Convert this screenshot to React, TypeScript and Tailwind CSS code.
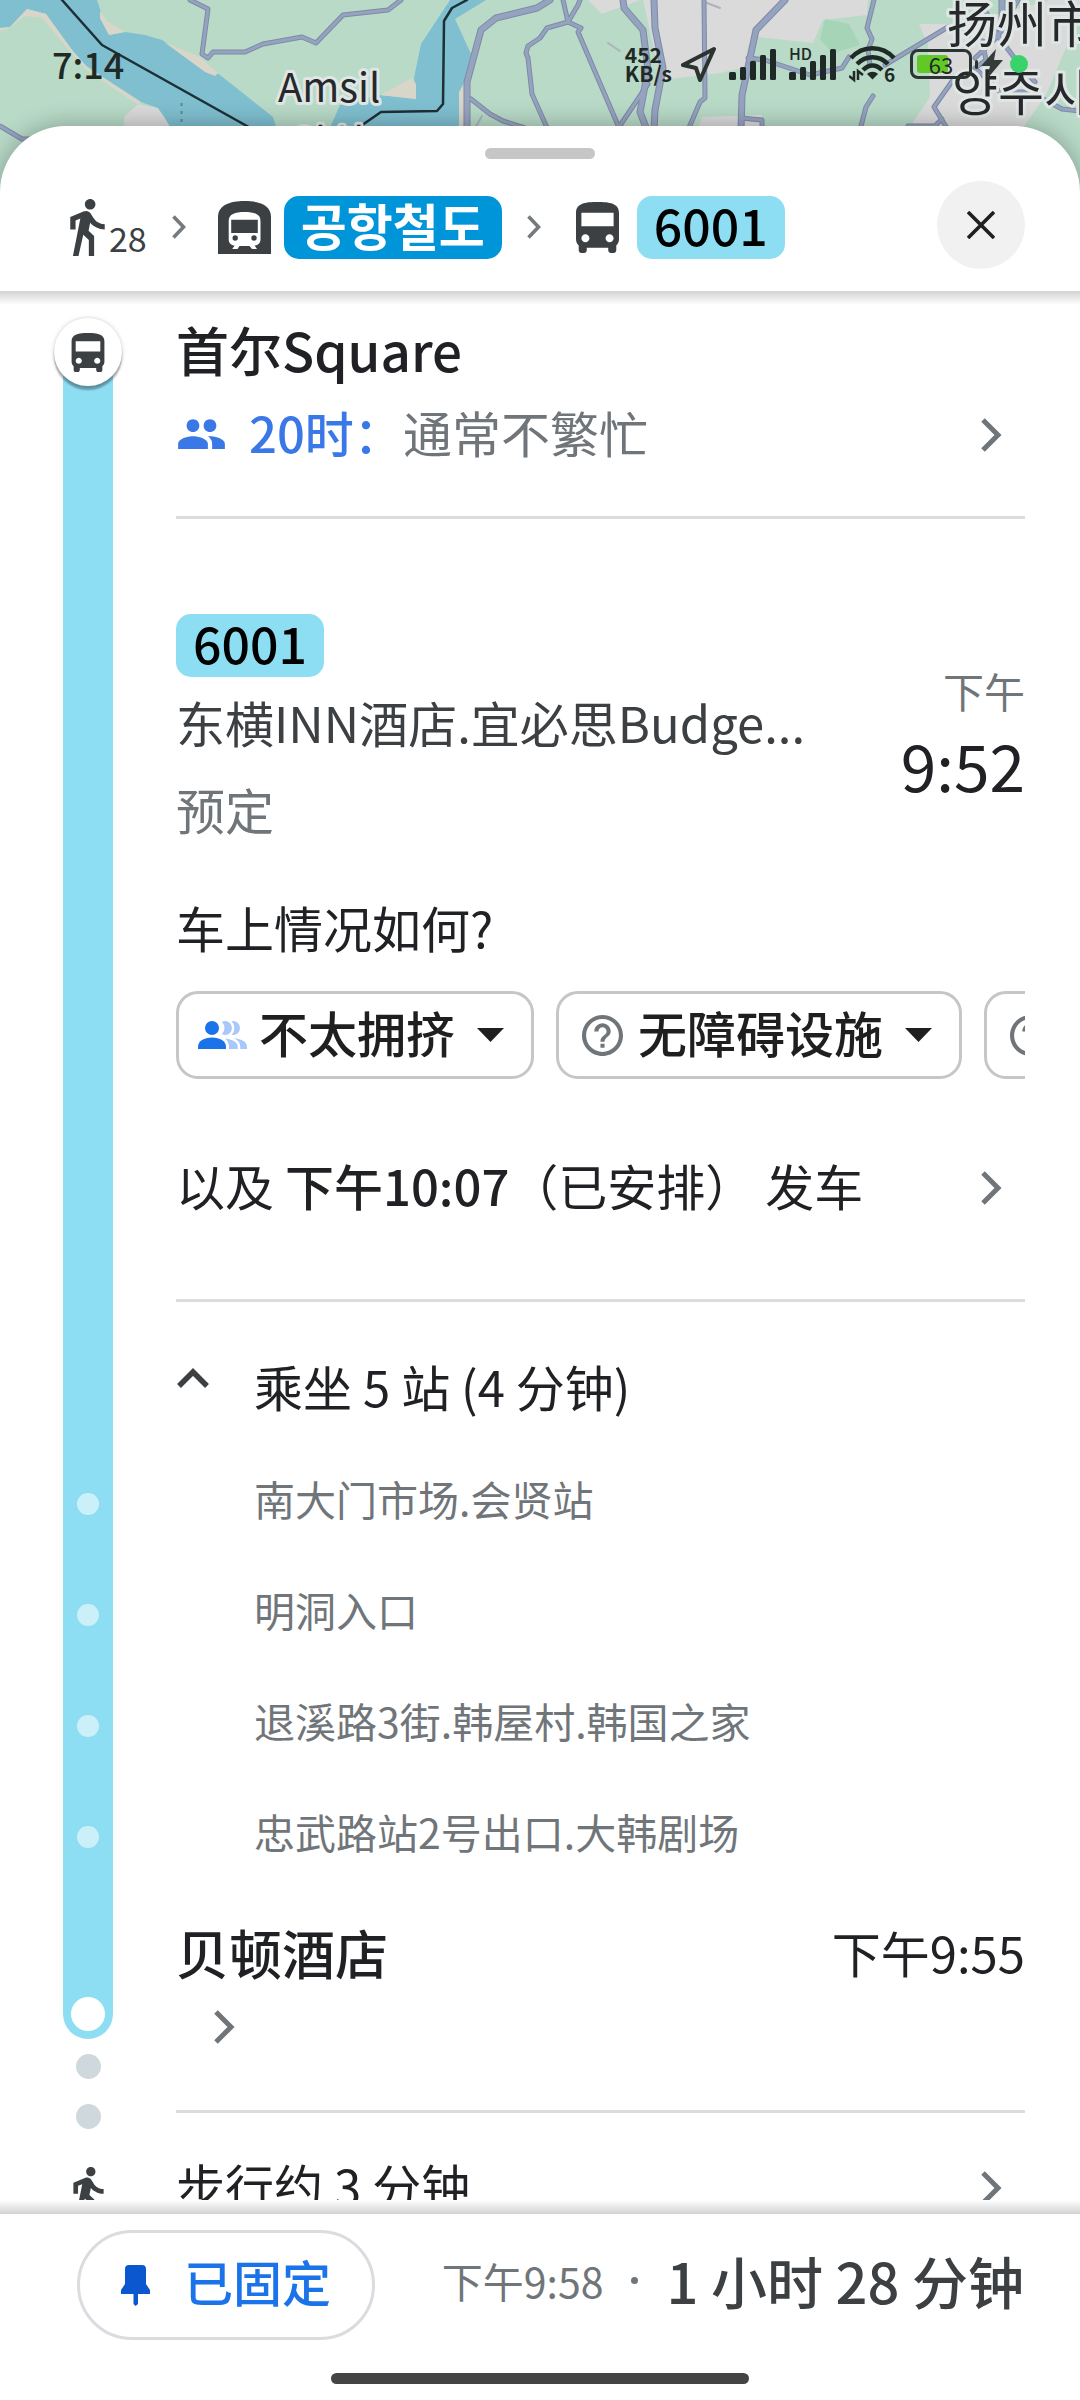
import React from "react";

function Chevron() {
  return (
    <svg viewBox="0 -6 21 40" className="h-[40px] w-[21px] shrink-0" fill="none" stroke="#70757a" strokeWidth="5">
      <path d="M2 2 L17 17 L2 32" />
    </svg>
  );
}

function StepArrow() {
  return (
    <svg viewBox="0 0 14 24" className="ml-[25px] mr-[32px] h-[24px] w-[14px] shrink-0" fill="none" stroke="#757a7e" strokeWidth="3.6">
      <path d="M1.5 1.5 L11.5 12 L1.5 22.5" />
    </svg>
  );
}

function Walk({ className }: { className: string }) {
  return (
    <svg viewBox="6 1.5 13 21.5" className={"shrink-0 " + className} fill="#3c4043">
      <path d="M13.5 5.5c1.1 0 2-.9 2-2s-.9-2-2-2-2 .9-2 2 .9 2 2 2zM9.8 8.9L7 23h2.1l1.8-8 2.1 2v6h2v-7.5l-2.1-2 .6-3C14.8 12 16.8 13 19 13v-2c-1.9 0-3.5-1-4.3-2.4l-1-1.6c-.4-.6-1-1-1.7-1-.3 0-.5.1-.8.1L6 8.3V13h2V9.6l1.8-.7" />
    </svg>
  );
}

function Bus({ className }: { className: string }) {
  return (
    <svg viewBox="4 2 16 19" className={"shrink-0 " + className} fill="#3c4043">
      <path d="M4 16c0 .88.39 1.67 1 2.22V20c0 .55.45 1 1 1h1c.55 0 1-.45 1-1v-1h8v1c0 .55.45 1 1 1h1c.55 0 1-.45 1-1v-1.78c.61-.55 1-1.34 1-2.22V6c0-3.5-3.58-4-8-4s-8 .5-8 4v10zm3.5 1c-.83 0-1.5-.67-1.5-1.5S6.67 14 7.5 14s1.5.67 1.5 1.5S8.33 17 7.5 17zm9 0c-.83 0-1.5-.67-1.5-1.5s.67-1.5 1.5-1.5 1.5.67 1.5 1.5-.67 1.5-1.5 1.5zm1.5-6H6V6h12v5z" />
    </svg>
  );
}

function Train() {
  return (
    <svg viewBox="0 0 53 53" className="mr-[13px] size-[53px] shrink-0">
      <path d="M0 53V16C0 4 12 0 26.500 0S53 4 53 16V53Z" fill="#3c4043" />
      <path d="M10.700 20C10.700 13 17 11 26.600 11S42.500 13 42.500 20V38.500C42.500 42 40 44.500 36.500 44.500L39 48H34L31.500 45H21.500L19.500 48H14.200L16.700 44.500C13.200 44.500 10.700 42 10.700 38.500Z" fill="#fff" />
      <path d="M13.200 18.700H39.800V32H13.200Z" fill="#3c4043" />
      <circle cx="17.200" cy="37" r="2.700" fill="#3c4043" />
      <circle cx="36" cy="37" r="2.700" fill="#3c4043" />
    </svg>
  );
}

function Help() {
  return (
    <svg viewBox="2 2 20 20" className="size-[41px] shrink-0" fill="#70757a">
      <path d="M11 18h2v-2h-2v2zm1-16C6.480 2 2 6.480 2 12s4.480 10 10 10 10-4.480 10-10S17.520 2 12 2zm0 18c-4.410 0-8-3.590-8-8s3.590-8 8-8 8 3.590 8 8-3.590 8-8 8zm0-14c-2.210 0-4 1.790-4 4h2c0-1.100.9-2 2-2s2 .9 2 2c0 2-3 1.750-3 5h2c0-2.250 3-2.500 3-5 0-2.210-1.790-4-4-4z" />
    </svg>
  );
}

function Crowd() {
  return (
    <svg viewBox="0 0 49 28" className="h-[28px] w-[49px] shrink-0">
      <g fill="#a8c7fa">
        <circle cx="35" cy="7" r="7" />
        <path d="M30 28V17C42 17 49 20 49 26V28Z" />
        <g stroke="#fff" strokeWidth="2.500">
          <circle cx="27" cy="7" r="8.200" />
          <path d="M20 30V16C34 16 41 19 41 26V30Z" />
        </g>
      </g>
      <circle cx="18" cy="7" r="8.500" fill="#fff" />
      <path d="M0 30V15H18C28 16 31 20 31 26V30Z" fill="#fff" />
      <circle cx="14" cy="7" r="7" fill="#1a73e8" />
      <path d="M0 28V26C0 20 6 16.500 14 16.500S28 20 28 26V28Z" fill="#1a73e8" />
    </svg>
  );
}

function Caret() {
  return (
    <svg viewBox="0 0 27 14" className="h-[14px] w-[27px] shrink-0" fill="#1f1f1f">
      <path d="M0 0H27L13.500 14Z" />
    </svg>
  );
}

const ROADS = [
  "M0 126L22 139H40",
  "M190 0L208 9L202 54L208 58L213 52H245L263 44L302 37L316 43L343 15L388 10L401 0",
  "M563 0L568 22M580 0L578 5L568 22L547 28L540 38L528 46L526 53L528 58L532 94L548 130",
  "M568 22L581 28L578 32L620 130",
  "M648 84L617 130",
  "M704 0L705 98L700 102L688 130",
  "M471 99L490 114L503 121L525 128",
  "M748 58L765 60L810 75L842 68L849 57",
  "M741 118L762 120V130",
  "M874 0L867 28L872 39L868 50L870 65",
  "M873 96L866 107L860 130",
  "M885 65L948 27L990 44L975 58",
  "M953 80L934 107L942 120L948 130M908 126H935L942 119",
  "M980 0L998 36L984 50L986 60L975 68L1000 92L1030 92L1062 109L1080 111",
  "M1018 0L998 36L1016 60L1035 82",
];
const WIDE_ROADS = [
  "M550 0L537 8L496 18L481 30L467 82V130",
  "M623 0L624 8L643 30L648 70L640 112L647 130",
  "M654 0L655 28L663 68L655 110L654 130",
  "M785 0L756 30L742 95L741 130",
  "M1002 0V30",
];

function MapView() {
  return (
    <svg
      viewBox="0 0 1080 200"
      preserveAspectRatio="xMinYMin slice"
      className="absolute inset-x-0 top-0 h-[200px] w-full"
      fontFamily="'Noto Sans CJK SC', sans-serif"
    >
      <path d="M0 0H1080V200H0Z" fill="#b8dac7" />
      <g fill="#dadada">
        <path d="M643 0H868L867 15L823 20L813 43L758 37L746 67L720 73L661 80Z" />
        <path d="M588 0L602 14L640 0Z" />
        <path d="M702 117L762 115V130H698Z" />
        <path d="M919 24H960L1050 0H1080V20L1065 50L1046 95L1023 128H909L930 97L928 45Z" />
        <path d="M124 117L138 104L158 108L172 130H124Z" />
      </g>
      <path d="M825 19L849 24L860 45L833 53L820 40Z" fill="#a5d5b6" />
      <g fill="#7fbfd0">
        <path d="M0 0H97L101 12L100 18L109 35L125 32L145 35L162 40L220 75L273 117L277 130H172L165 118L158 108L141 102L85 65L72 50L46 14L27 9L10 27L0 28Z" />
        <path d="M450 0H486L455 19L471 54L463 85L459 95V130H329L340 105L380 95L416 99L414 78L421 44Z" />
      </g>
      <g fill="#d8d5c9">
        <path d="M0 28L10 27L27 9L46 14L72 50L90 70L141 102L138 105L85 69L68 49L42 18L25 16L8 29L0 31Z" />
        <path d="M100 11L107 21L125 32L109 35L100 18Z" />
        <path d="M164 42L200 57L218 73L215 76L205 72Z" />
        <path d="M380 95L412 78L416 84V99Z" />
        <path d="M459 92L466 80V130H459Z" />
      </g>
      <g fill="none" strokeLinejoin="round" strokeLinecap="round">
        <path d="M608 43L620 51M707 3L720 8M482 116L474 130" stroke="#a9b5b9" strokeWidth="2" />
        <g stroke="#7d8aa8">
          {ROADS.map((d) => <path key={d} d={d} strokeWidth="5" />)}
          {WIDE_ROADS.map((d) => <path key={d} d={d} strokeWidth="7" />)}
        </g>
        <g stroke="#96a3bf">
          {ROADS.map((d) => <path key={d} d={d} strokeWidth="3" />)}
          {WIDE_ROADS.map((d) => <path key={d} d={d} strokeWidth="5" />)}
        </g>
        <path d="M62 0L102 45L254 130M355 130L381 112L437 111L443 104L444 21L452 8L467 0" stroke="#1d3036" strokeWidth="2.500" />
        <path d="M181.500 103V130" stroke="#5d8794" strokeWidth="2" strokeDasharray="3 5" strokeLinecap="butt" />
      </g>
      <g fill="#26282b" stroke="#dfe6e3" strokeWidth="6" strokeLinejoin="round" paintOrder="stroke">
        <text x="278" y="102" fontSize="40">Amsil</text>
        <text x="292" y="158" fontSize="40">암실</text>
        <text x="947" y="43" fontSize="50">扬州市</text>
        <text x="952" y="111" fontSize="50">양주시</text>
      </g>
    </svg>
  );
}

function Signal() {
  return (
    <svg viewBox="0 0 48 31" className="h-[31px] w-[48px]" fill="#1f2a26">
      <rect x="0" y="23" width="7" height="8" rx="1.500" />
      <rect x="11" y="18" width="6" height="13" rx="1.500" />
      <rect x="21" y="12" width="6" height="19" rx="1.500" />
      <rect x="31" y="6" width="6" height="25" rx="1.500" />
      <rect x="41" y="0" width="6" height="31" rx="1.500" />
    </svg>
  );
}

function StatusBar() {
  return (
    <header className="relative flex h-[126px] shrink-0 items-start justify-between px-[52px] pt-[40px] text-[#1f2a26]">
      <time className="text-[36px] font-medium leading-[46px]">7:14</time>
      <div className="flex h-[48px] items-center">
        <div className="mr-[9px] text-[21px] font-bold leading-[19px]">
          452
          <br />
          KB/s
        </div>
        <svg viewBox="0 0 36 37" className="mr-[12px] h-[37px] w-[36px]" fill="none" stroke="#2b3330" strokeWidth="4" strokeLinejoin="round">
          <path d="M33 3L2 19L15 22L19 34Z" />
        </svg>
        <Signal />
        <div className="relative ml-[12px] mr-[12px]">
          <Signal />
          <span className="absolute left-0 -top-[6px] text-[16px] font-medium leading-[20px]">HD</span>
        </div>
        <svg viewBox="0 0 48 37" className="mr-[13px] h-[37px] w-[48px]">
          <g fill="none" stroke="#1f2a26" strokeWidth="4.500">
            <path d="M2 12C14 -1 33 -1 45 12" />
            <path d="M8 18C17 9 30 9 39 18" />
            <path d="M14 24C20 18 27 18 33 24" />
          </g>
          <path d="M18 28C21 25 26 25 29 28L23.500 33.500Z" fill="#1f2a26" />
          <path d="M5 25V34L0 30M9 34V25L14 29" fill="none" stroke="#1f2a26" strokeWidth="2.500" />
          <text x="35" y="36" fontSize="19" fontWeight="700" fill="#1f2a26">6</text>
        </svg>
        <div className="relative flex h-[30px] w-[62px] items-center justify-center rounded-[8px] border-[3px] border-[#2a3430]">
          <div className="absolute left-[4px] top-[3px] h-[18px] w-[31px] rounded-[3px] bg-[#62c827]" />
          <span className="relative text-[22px] leading-[22px]">63</span>
        </div>
        <span className="ml-[3px] mr-[3px] h-[9px] w-[3px] rounded-full bg-[#2a3430]" />
        <svg viewBox="0 0 22 30" className="mr-[7px] h-[30px] w-[22px]" fill="#333c3a">
          <path d="M15 0L0 17H9L6 30L22 11H13Z" />
        </svg>
        <span className="size-[18px] rounded-full bg-[#38d46b]" />
      </div>
    </header>
  );
}

function RoutePill({ children }: { children: React.ReactNode }) {
  return (
    <span className="inline-flex h-[63px] items-center rounded-[15px] bg-[#8edef3] px-[17px] pb-[6px] text-[50px] font-medium leading-[57px] text-black">
      {children}
    </span>
  );
}

function Row({ rail, children }: { rail: React.ReactNode; children: React.ReactNode }) {
  return (
    <div className="flex">
      <div className="flex w-[176px] shrink-0 flex-col items-center">{rail}</div>
      <div className="min-w-0 flex-1 pr-[55px]">{children}</div>
    </div>
  );
}

const STOPS = ["南大门市场.会贤站", "明洞入口", "退溪路3街.韩屋村.韩国之家", "忠武路站2号出口.大韩剧场"];

export default function App() {
  return (
    <div className="relative flex h-screen flex-col overflow-hidden bg-[#b8dac7] font-['Noto_Sans_CJK_SC','Noto_Sans_CJK_KR',sans-serif] text-[#202124]">
      <MapView />
      <StatusBar />
      <div className="relative flex min-h-0 flex-1 flex-col overflow-hidden rounded-t-[66px] bg-white shadow-[0_0_24px_rgba(0,0,0,0.3)]">
        <header className="shrink-0 pb-[22px] pt-[22px]">
          <div className="mx-auto h-[11px] w-[110px] rounded-full bg-[#c6c6c6]" />
          <div className="mt-[22px] flex h-[88px] items-center justify-between pl-[70px] pr-[55px]">
            <div className="flex items-center pt-[4px]">
              <Walk className="mr-[4px] h-[57px] w-[35px]" />
              <span className="self-end text-[34px] leading-[42px] text-[#3c4043]">28</span>
              <StepArrow />
              <Train />
              <span className="flex h-[63px] items-center rounded-[15px] bg-[#0095d8] px-[17px] pb-[6px] font-['Noto_Sans_CJK_KR',sans-serif] text-[50px] font-bold leading-[57px] text-white">
                공항철도
              </span>
              <StepArrow />
              <Bus className="ml-[3px] mr-[18px] h-[51px] w-[43px]" />
              <RoutePill>6001</RoutePill>
            </div>
            <button aria-label="关闭" className="flex size-[88px] items-center justify-center rounded-full bg-[#f1f1f1]">
              <svg viewBox="0 0 28 28" className="size-[28px]" stroke="#1f1f1f" strokeWidth="3.600">
                <path d="M1 1L27 27M27 1L1 27" />
              </svg>
            </button>
          </div>
        </header>

        <main className="relative min-h-0 flex-1 overflow-hidden">
          <div className="absolute inset-x-0 top-0 h-[14px] bg-linear-to-b from-[#d2d2d2] to-white" />
          <Row
            rail={
              <>
                <div className="relative z-10 mt-[27px] flex size-[68px] shrink-0 items-center justify-center rounded-full bg-white shadow-[0_4px_2px_rgba(0,0,0,0.3),0_0_4px_rgba(0,0,0,0.2)]">
                  <Bus className="h-[39px] w-[34px]" />
                </div>
                <div className="-mt-[34px] w-[50px] flex-1 bg-[#8edef3]" />
              </>
            }
          >
            <h2 className="pt-[26px] text-[53px] font-medium leading-[64px]">首尔Square</h2>
            <button className="mt-[19px] flex w-full items-center pr-[23px] text-left text-[49px] leading-[64px]">
              <svg viewBox="1 3 22 16" className="ml-[2px] mr-[24px] h-[34px] w-[47px] shrink-0" fill="#3b78e7">
                <path d="M16 11c1.660 0 2.990-1.340 2.990-3S17.660 5 16 5c-1.660 0-3 1.340-3 3s1.340 3 3 3zm-8 0c1.660 0 2.990-1.340 2.990-3S9.660 5 8 5C6.340 5 5 6.340 5 8s1.340 3 3 3zm0 2c-2.330 0-7 1.170-7 3.500V19h14v-2.500c0-2.330-4.670-3.500-7-3.500zm8 0c-.29 0-.62.02-.97.05 1.160.84 1.970 1.970 1.970 3.450V19h6v-2.500c0-2.330-4.670-3.500-7-3.500z" />
              </svg>
              <span className="font-medium text-[#3b78e7]">20时：</span>
              <span className="flex-1 text-[#70757a]">通常不繁忙</span>
              <Chevron />
            </button>
            <hr className="mt-[52px] border-t-[3px] border-[#dadce0]" />
          </Row>

          <Row rail={<div className="w-[50px] flex-1 bg-[#8edef3]" />}>
            <div className="flex pt-[95px]">
              <div className="flex min-w-0 flex-1 flex-col items-start text-[49px] leading-[64px]">
                <RoutePill>6001</RoutePill>
                <p className="mt-[13px] whitespace-nowrap text-[#3c4043]">东横INN酒店.宜必思Budge...</p>
                <p className="mt-[23px] text-[#70757a]">预定</p>
              </div>
              <div className="mt-[48px] shrink-0 text-right">
                <p className="text-[41px] leading-[56px] text-[#70757a]">下午</p>
                <p className="mt-[8px] text-[64px] leading-[76px]">9:52</p>
              </div>
            </div>
            <h3 className="mt-[54px] text-[49px] leading-[64px]">车上情况如何?</h3>
            <div className="mt-[32px] flex gap-[22px] overflow-hidden text-[49px] font-medium leading-[64px] text-[#1f1f1f]">
              <button aria-haspopup="listbox" className="flex h-[88px] shrink-0 items-center rounded-[22px] border-[3px] border-[#c6c6c6] pl-[19px] pr-[27px]">
                <Crowd />
                <span className="ml-[12px] mr-[22px] pb-[6px]">不太拥挤</span>
                <Caret />
              </button>
              <button aria-haspopup="listbox" className="flex h-[88px] shrink-0 items-center rounded-[22px] border-[3px] border-[#c6c6c6] pl-[23px] pr-[27px]">
                <Help />
                <span className="ml-[15px] mr-[22px] pb-[6px]">无障碍设施</span>
                <Caret />
              </button>
              <button aria-label="更多" className="flex h-[88px] shrink-0 items-center rounded-[22px] border-[3px] border-[#c6c6c6] pl-[23px] pr-[27px]">
                <Help />
              </button>
            </div>
            <button className="mt-[74px] flex w-full items-center justify-between whitespace-pre pr-[23px] text-left text-[49px] leading-[64px]">
              <span>
                以及 <span className="font-medium">下午10:07</span>（已安排） 发车
              </span>
              <Chevron />
            </button>
            <hr className="mt-[82px] border-t-[3px] border-[#dadce0]" />
          </Row>

          <Row rail={<div className="w-[50px] flex-1 bg-[#8edef3]" />}>
            <button aria-expanded="true" className="flex w-full items-center pb-[30px] pt-[52px] text-left text-[49px] leading-[64px]">
              <svg viewBox="0 0 32 20" className="mb-[16px] ml-[1px] mr-[45px] h-[20px] w-[32px] shrink-0" fill="none" stroke="#3c4043" strokeWidth="5.500">
                <path d="M2 18L16 4L30 18" />
              </svg>
              乘坐 5 站 (4 分钟)
            </button>
          </Row>
          {STOPS.map((stop) => (
            <Row
              key={stop}
              rail={
                <div className="flex w-[50px] flex-1 items-center justify-center bg-[#8edef3]">
                  <span className="size-[22px] rounded-full bg-[#cbf0f9]" />
                </div>
              }
            >
              <p className="pb-[10px] pl-[78px] text-[41px] leading-[101px] text-[#70757a]">{stop}</p>
            </Row>
          ))}
          <Row
            rail={
              <>
                <div className="flex h-[147px] w-[50px] shrink-0 items-end justify-center rounded-b-full bg-[#8edef3] pb-[8px]">
                  <span className="size-[34px] rounded-full bg-white" />
                </div>
                <span className="mt-[15px] size-[25px] shrink-0 rounded-full bg-[#cfd8dd]" />
                <span className="mt-[25px] size-[25px] shrink-0 rounded-full bg-[#cfd8dd]" />
                <Walk className="mt-[38px] h-[50px] w-[31px]" />
              </>
            }
          >
            <div className="flex items-center justify-between pt-[28px] leading-[64px]">
              <h2 className="text-[53px] font-medium">贝顿酒店</h2>
              <time className="text-[49px]">下午9:55</time>
            </div>
            <button aria-label="详情" className="mt-[20px] block pl-[38px]">
              <Chevron />
            </button>
            <hr className="mt-[66px] border-t-[3px] border-[#dadce0]" />
            <button className="mt-[40px] flex w-full items-center justify-between pr-[23px] text-[49px] leading-[64px]">
              <span>步行约 3 分钟</span>
              <Chevron />
            </button>
          </Row>
        </main>

        <div className="h-[14px] shrink-0 bg-linear-to-t from-[#d2d2d2] to-white" />
        <footer className="shrink-0 pb-[16px] pt-[16px]">
          <div className="flex items-center justify-between pl-[77px] pr-[56px]">
            <button className="flex h-[110px] items-center rounded-full border-[3px] border-[#dadce0] px-[41px] text-[49px] font-medium leading-[64px] text-[#1a73e8]">
              <svg viewBox="0 0 29 41" className="mr-[34px] h-[41px] w-[29px]" fill="#0b57d0">
                <path d="M4 4Q4 0 8 0H21Q25 0 25 4V19L29 25V29H17V39L14.500 41L12.500 39V29H0V25L4 19Z" />
              </svg>
              <span className="pb-[8px]">已固定</span>
            </button>
            <p className="flex items-center pb-[10px] leading-[64px]">
              <span className="text-[41px] text-[#70757a]">下午9:58</span>
              <span className="mx-[28px] size-[7px] rounded-full bg-[#70757a]" />
              <span className="text-[56px] font-medium text-[#3c4043]">1 小时 28 分钟</span>
            </p>
          </div>
          <div className="mx-auto mt-[33px] h-[11px] w-[418px] rounded-full bg-[#444]" />
        </footer>
      </div>
    </div>
  );
}
